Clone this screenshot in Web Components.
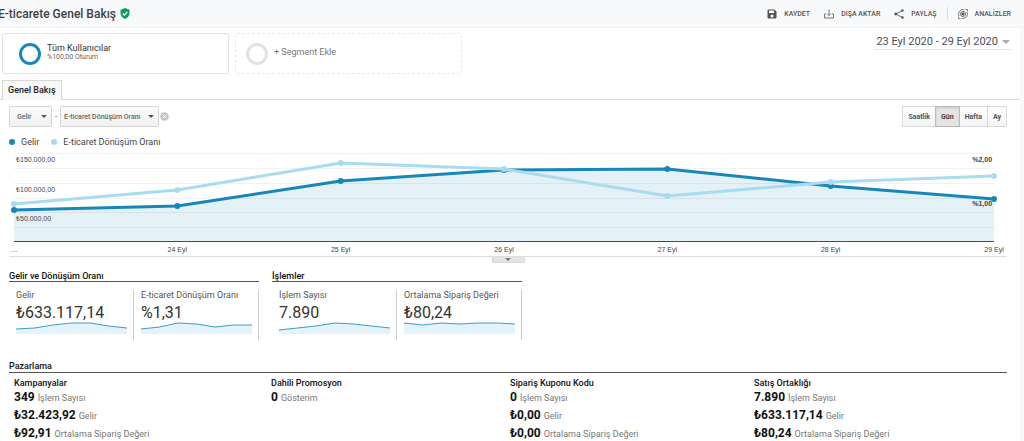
<!DOCTYPE html>
<html lang="tr">
<head>
<meta charset="utf-8">
<meta name="viewport" content="width=device-width, initial-scale=1">
<title>E-ticarete Genel Bakış</title>
<style>
html{scrollbar-width:none}
body{margin:0;background:#f8f9fb;color:#333;font-family:Roboto,"Liberation Sans",sans-serif;font-size:8px;line-height:12px}
</style>
</head>
<body>
<ecommerce-page></ecommerce-page>
<script>
const define = (name, css, html, setup) => {
  const template = document.createElement('template');
  template.innerHTML = `<style>
    *{box-sizing:border-box}
    button,select{font:inherit;color:inherit;margin:0;padding:0;border:0;background:none;border-radius:0;cursor:pointer}
    svg{display:block}
    ${css}</style>${html}`;
  customElements.define(name, class extends HTMLElement {
    connectedCallback() {
      if (this.shadowRoot) return;
      this.attachShadow({mode: 'open'}).append(template.content.cloneNode(true));
      if (setup) setup(this, this.shadowRoot);
    }
  });
};

define('action-button', `
  :host{display:block}
  button{display:flex;align-items:center;gap:7px;font-size:7px;font-weight:500;line-height:12px;color:#555}
  ::slotted(svg){display:block;width:10px;height:10px}
`, `<button type="button"><slot name="icon"></slot><slot></slot></button>`);

define('top-bar', `
  :host{display:flex;align-items:center;justify-content:space-between;height:28px;padding-right:13px;border-bottom:1px solid #f2f3f4}
  .title{display:flex;align-items:center;gap:4px;margin-left:-2px}
  h1{margin:0;font-size:12px;line-height:16px;font-weight:500;color:#3c4043}
  nav{display:flex;align-items:center;gap:14px}
  .split{width:1px;height:13px;background:#dcdee0;margin:0 -4px}
`, `
  <div class="title"><h1>E-ticarete Genel Bakış</h1>
    <svg width="10" height="11" viewBox="0 0 20 22" role="img" aria-label="Doğrulandı"><path fill="#0f9d58" d="M10 0 19 3.500V10c0 6-4 10-9 12-5-2-9-6-9-12V3.500z"/><path d="m5.500 11 3.200 3.200 6-6.400" fill="none" stroke="#fff" stroke-width="2.200"/></svg>
  </div>
  <nav aria-label="Rapor işlemleri">
    <action-button><svg slot="icon" viewBox="0 0 20 20"><path fill="#555" fill-rule="evenodd" d="M2 1h13l4 4v12a2 2 0 0 1-2 2H3a2 2 0 0 1-2-2V3a2 2 0 0 1 1-2zm2 2v5h10V3zm6 8a3 3 0 1 0 0 6 3 3 0 0 0 0-6z"/></svg>KAYDET</action-button>
    <action-button><svg slot="icon" viewBox="0 0 20 20" fill="none" stroke="#666" stroke-width="1.800"><path d="M4 10H1v8h18v-8h-3M10 1v12M6 9l4 4 4-4"/></svg>DIŞA AKTAR</action-button>
    <action-button><svg slot="icon" viewBox="0 0 20 20"><path d="M17 3 4 10l13 7" fill="none" stroke="#555" stroke-width="1.800"/><g fill="#555"><circle cx="17" cy="3" r="2.400"/><circle cx="3.500" cy="10" r="2.800"/><circle cx="17" cy="17" r="2.400"/></g></svg>PAYLAŞ</action-button>
    <span class="split"></span>
    <action-button><svg slot="icon" viewBox="0 0 20 20" fill="none" stroke="#555" stroke-width="1.500"><path d="M13 1.500A9 9 0 0 0 2 14M7 18.500A9 9 0 0 0 18 6M15 1h4v4M5 19H1v-4"/><circle cx="10" cy="10" r="5.200"/><circle cx="10" cy="10" r="2.400" fill="#555"/></svg>ANALİZLER</action-button>
  </nav>
`);

define('segment-card', `
  :host{display:block;width:227px}
  button{display:flex;align-items:center;gap:6px;width:100%;height:41px;padding:0 0 0 16px;text-align:left;border:1px solid #e4e4e4;border-radius:2px;color:#333}
  .ring{flex:none;width:22px;height:22px;border:3px solid #1787bb;border-radius:50%}
  .copy{font-size:9px;line-height:10px;padding-bottom:2px}
  :host([empty]) button{padding-left:10px;border:1px dashed #eaeaea;color:#777}
  :host([empty]) .ring{border-color:#e2e2e2}
  :host([empty]) .copy{padding-bottom:4px}
  ::slotted(small){display:block;font-size:7px;line-height:9px;color:#666}
`, `<button type="button"><span class="ring"></span><span class="copy"><slot></slot></span></button>`);

define('date-range', `
  :host{display:block}
  button{display:flex;align-items:center;gap:4px;padding:1px 1px 0 2px;height:17px;font-size:11px;line-height:14px;color:#4a5058;border-bottom:1px solid #e8e8e8}
  i{border:4px solid transparent;border-top-color:#aaa;border-bottom:0}
`, `<button type="button"><slot></slot><i></i></button>`);

define('report-tabs', `
  :host{display:flex;padding-left:2px;border-bottom:1px solid #d5d5d5;margin-top:6px}
  button{height:20px;padding:0 5px;margin-bottom:-1px;border:1px solid #d5d5d5;border-bottom-color:#f8f8f8;background:#f8f8f8;font-size:9px;font-weight:500;color:#222}
`, `<div role="tablist"><button type="button" role="tab" aria-selected="true"><slot></slot></button></div>`);

define('metric-select', `
  :host{display:block;position:relative}
  select{display:block;appearance:none;width:100%;height:21px;padding:0 14px 0 0;border:1px solid #d6d6d6;border-radius:2px;background:linear-gradient(#fbfbfb,#f1f1f1);font-size:7px;font-weight:500;line-height:12px;color:#666;padding-left:var(--inset,7px)}
  i{position:absolute;right:5px;top:9px;border:3px solid transparent;border-top-color:#555;border-bottom:0;pointer-events:none}
`, `<select><option></option></select><i></i>`, (host, root) => {
  root.querySelector('option').textContent = host.getAttribute('value');
  root.querySelector('select').setAttribute('aria-label', host.getAttribute('label'));
});

define('period-switch', `
  :host{display:flex}
  button{height:21px;padding:0 5px;margin-left:-1px;border:1px solid #d9d9d9;background:linear-gradient(#fdfdfd,#f4f4f4);font-size:7px;font-weight:700;color:#555}
  button:first-child{padding:0 4px;border-radius:2px 0 0 2px}
  button:last-child{border-radius:0 2px 2px 0}
  button[aria-pressed=true]{position:relative;border-color:#bbb;background:#e4e4e4;box-shadow:inset 0 1px 2px #0002;color:#444}
`, `<button type="button" aria-pressed="false">Saatlik</button><button type="button" aria-pressed="true">Gün</button><button type="button" aria-pressed="false">Hafta</button><button type="button" aria-pressed="false">Ay</button>`);

define('chart-controls', `
  :host{display:flex;align-items:center;padding:6px 13px 0 9px}
  .first{width:43px;--inset:7px}
  .second{width:99px;--inset:3px}
  .dash{width:8px;text-align:center;line-height:12px;color:#555}
  .remove{display:block;margin-left:1px}
  period-switch{margin-left:auto}
`, `
  <metric-select class="first" value="Gelir" label="Birinci metrik"></metric-select>
  <span class="dash">-</span>
  <metric-select class="second" value="E-ticaret Dönüşüm Oranı" label="İkinci metrik"></metric-select>
  <button class="remove" type="button" aria-label="Metriği kaldır"><svg width="9" height="9" viewBox="0 0 18 18"><circle cx="9" cy="9" r="8.500" fill="#c4c4c4"/><path d="m5.500 5.500 7 7m0-7-7 7" stroke="#fff" stroke-width="2"/></svg></button>
  <period-switch></period-switch>
`);

define('line-chart', `
  :host{display:block;padding:8px 13px 0 9px}
  .legend{display:flex;gap:12px;font-size:9px;line-height:14px;color:#444}
  .legend span{display:flex;align-items:center;gap:6px}
  .legend i{width:6px;height:6px;border-radius:50%;background:#1787bb}
  .legend .pale{background:#a9d9ec}
  .plot{padding:4px 13px 0 5px;border-bottom:1px solid #ddd}
  svg{width:100%;height:103px;overflow:visible;font-family:"Liberation Sans",Arial,sans-serif}
  .plot svg svg{height:90px}
  text{font-size:7px;fill:#444}
  .strong{font-weight:700}
  .grid line{stroke:#000;stroke-opacity:.05}
  path{fill:none;stroke-width:3;vector-effect:non-scaling-stroke}
  .handle{display:block;margin:0 auto;width:33px;height:6px;background:#e4e4e4;border:1px solid #d6d6d6;border-top:0;border-radius:0 0 2px 2px}
  .handle i{display:block;width:0;margin:0 auto;border:3px solid transparent;border-top-color:#777;border-bottom:0}
`, `
  <div class="legend"><span><i></i>Gelir</span><span><i class="pale"></i>E-ticaret Dönüşüm Oranı</span></div>
  <div class="plot"></div>
  <button class="handle" type="button" aria-label="Grafiği genişlet"><i></i></button>
`, (host, root) => {
  const revenue = [57, 53, 28, 17, 16, 33, 46];
  const rate = [51, 37, 10, 16, 43, 29, 23];
  const days = ['…', '24 Eyl', '25 Eyl', '26 Eyl', '27 Eyl', '28 Eyl', '29 Eyl'];
  const pos = i => (i / 6 * 100).toFixed(3) + '%';
  const path = series => 'M' + series.map((y, i) => `${i * 100} ${y}`).join('L');
  const dots = (series, color) => series.map((y, i) => `<circle cx="${pos(i)}" cy="${y}" r="3" fill="${color}"/>`).join('');
  const plane = inner => `<svg viewBox="0 0 600 90" preserveAspectRatio="none">${inner}</svg>`;
  root.querySelector('.plot').innerHTML = `<svg role="img" aria-label="Günlük gelir ve dönüşüm oranı">
    ${plane(`<path d="${path(revenue)}V89H0Z" style="fill:#e4f1f7"/>`)}
    <g class="grid">${[0, 15, 30, 45, 59, 74].map(y => `<line x1="0" x2="100%" y1="${y}.5" y2="${y}.5"/>`).join('')}</g>
    <line x1="0" x2="100%" y1="88.5" y2="88.5" stroke="#444d55"/>
    ${plane(`<path d="${path(revenue)}" stroke="#1787bb"/>`)}${dots(revenue, '#1787bb')}
    ${plane(`<path d="${path(rate)}" stroke="#a9dcee"/>`)}${dots(rate, '#a9dcee')}
    <text x="2" y="9">₺150.000,00</text><text x="2" y="39">₺100.000,00</text><text x="2" y="68">₺50.000,00</text>
    <g text-anchor="end"><text class="strong" x="99.800%" y="9">%2,00</text><text class="strong" x="99.800%" y="53">%1,00</text></g>
    <g text-anchor="middle">${days.map((day, i) => `<text x="${pos(i)}" y="99">${day}</text>`).join('')}</g></svg>`;
});

define('metric-tile', `
  :host{display:block;height:50px;padding:0 6px 0 7px;border-right:1px solid #ccc}
  .label{font-size:9px;line-height:10px;color:#555;white-space:nowrap}
  .value{font-size:16px;line-height:20px;margin-top:3px;color:#333}
  svg{width:100%;height:11px;overflow:visible}
  path{vector-effect:non-scaling-stroke}
`, `<div class="label"></div><div class="value"><slot></slot></div><svg viewBox="0 0 110 11" preserveAspectRatio="none" aria-hidden="true"></svg>`, (host, root) => {
  root.querySelector('.label').textContent = host.getAttribute('label');
  const values = host.getAttribute('trend').split(' ');
  const line = 'M' + values.map((y, i) => `${i * 110 / (values.length - 1)} ${y}`).join('L');
  root.querySelector('svg').innerHTML = `<path d="${line}V11H0Z" fill="#e4f2f9"/><path d="${line}" fill="none" stroke="#3a9cc8"/>`;
});

define('metric-group', `
  :host{display:block;width:250px}
  h2{margin:0 0 8px;font-size:9px;line-height:10px;font-weight:500;color:#111;border-bottom:1px solid #555}
  .tiles{display:grid;grid-template-columns:1fr 1fr}
`, `<h2></h2><div class="tiles"><slot></slot></div>`, (host, root) => {
  root.querySelector('h2').textContent = host.getAttribute('heading');
});

define('marketing-item', `
  :host{display:block}
  h3{margin:0;font-size:9px;line-height:12px;font-weight:500;color:#111}
  ::slotted(p){margin:0;font-size:9px;line-height:18px;color:#777;white-space:nowrap}
`, `<h3></h3><slot></slot>`, (host, root) => {
  root.querySelector('h3').textContent = host.getAttribute('heading');
});

define('marketing-report', `
  :host{display:block;padding:20px 13px 0 9px}
  h2{margin:0;font-size:9px;line-height:12px;font-weight:500;color:#111;border-bottom:1px solid #555}
  .items{display:grid;grid-template-columns:257fr 239fr 244fr 253fr;padding:4px 0 0 5px}
  b{font-size:12px;line-height:14px;font-weight:700;color:#111;margin-right:3px}
`, `
  <h2>Pazarlama</h2>
  <div class="items">
    <marketing-item heading="Kampanyalar"><p><b>349</b>İşlem Sayısı</p><p><b>₺32.423,92</b>Gelir</p><p><b>₺92,91</b>Ortalama Sipariş Değeri</p></marketing-item>
    <marketing-item heading="Dahili Promosyon"><p><b>0</b>Gösterim</p></marketing-item>
    <marketing-item heading="Sipariş Kuponu Kodu"><p><b>0</b>İşlem Sayısı</p><p><b>₺0,00</b>Gelir</p><p><b>₺0,00</b>Ortalama Sipariş Değeri</p></marketing-item>
    <marketing-item heading="Satış Ortaklığı"><p><b>7.890</b>İşlem Sayısı</p><p><b>₺633.117,14</b>Gelir</p><p><b>₺80,24</b>Ortalama Sipariş Değeri</p></marketing-item>
  </div>
`);

define('ecommerce-page', `
  :host{display:block}
  main{margin-right:4px;background:#fff}
  .segments{display:flex;gap:6px;padding:5px 9px 0 2px}
  date-range{margin-left:auto}
  .groups{display:flex;gap:13px;padding:8px 9px 0}
`, `
  <top-bar></top-bar>
  <main>
    <div class="segments">
      <segment-card>Tüm Kullanıcılar<small>%100,00 Oturum</small></segment-card>
      <segment-card empty>+ Segment Ekle</segment-card>
      <date-range>23 Eyl 2020 - 29 Eyl 2020</date-range>
    </div>
    <report-tabs>Genel Bakış</report-tabs>
    <chart-controls></chart-controls>
    <line-chart></line-chart>
    <div class="groups">
      <metric-group heading="Gelir ve Dönüşüm Oranı">
        <metric-tile label="Gelir" trend="6 5 2 0 0 3 5">₺633.117,14</metric-tile>
        <metric-tile label="E-ticaret Dönüşüm Oranı" trend="6 4 0 1 4 2 2">%1,31</metric-tile>
      </metric-group>
      <metric-group heading="İşlemler">
        <metric-tile label="İşlem Sayısı" trend="7 5 3 0 1 3 5">7.890</metric-tile>
        <metric-tile label="Ortalama Sipariş Değeri" trend="0 2 0 1 0 0 1">₺80,24</metric-tile>
      </metric-group>
    </div>
    <marketing-report></marketing-report>
  </main>
`);
</script>
</body>
</html>
